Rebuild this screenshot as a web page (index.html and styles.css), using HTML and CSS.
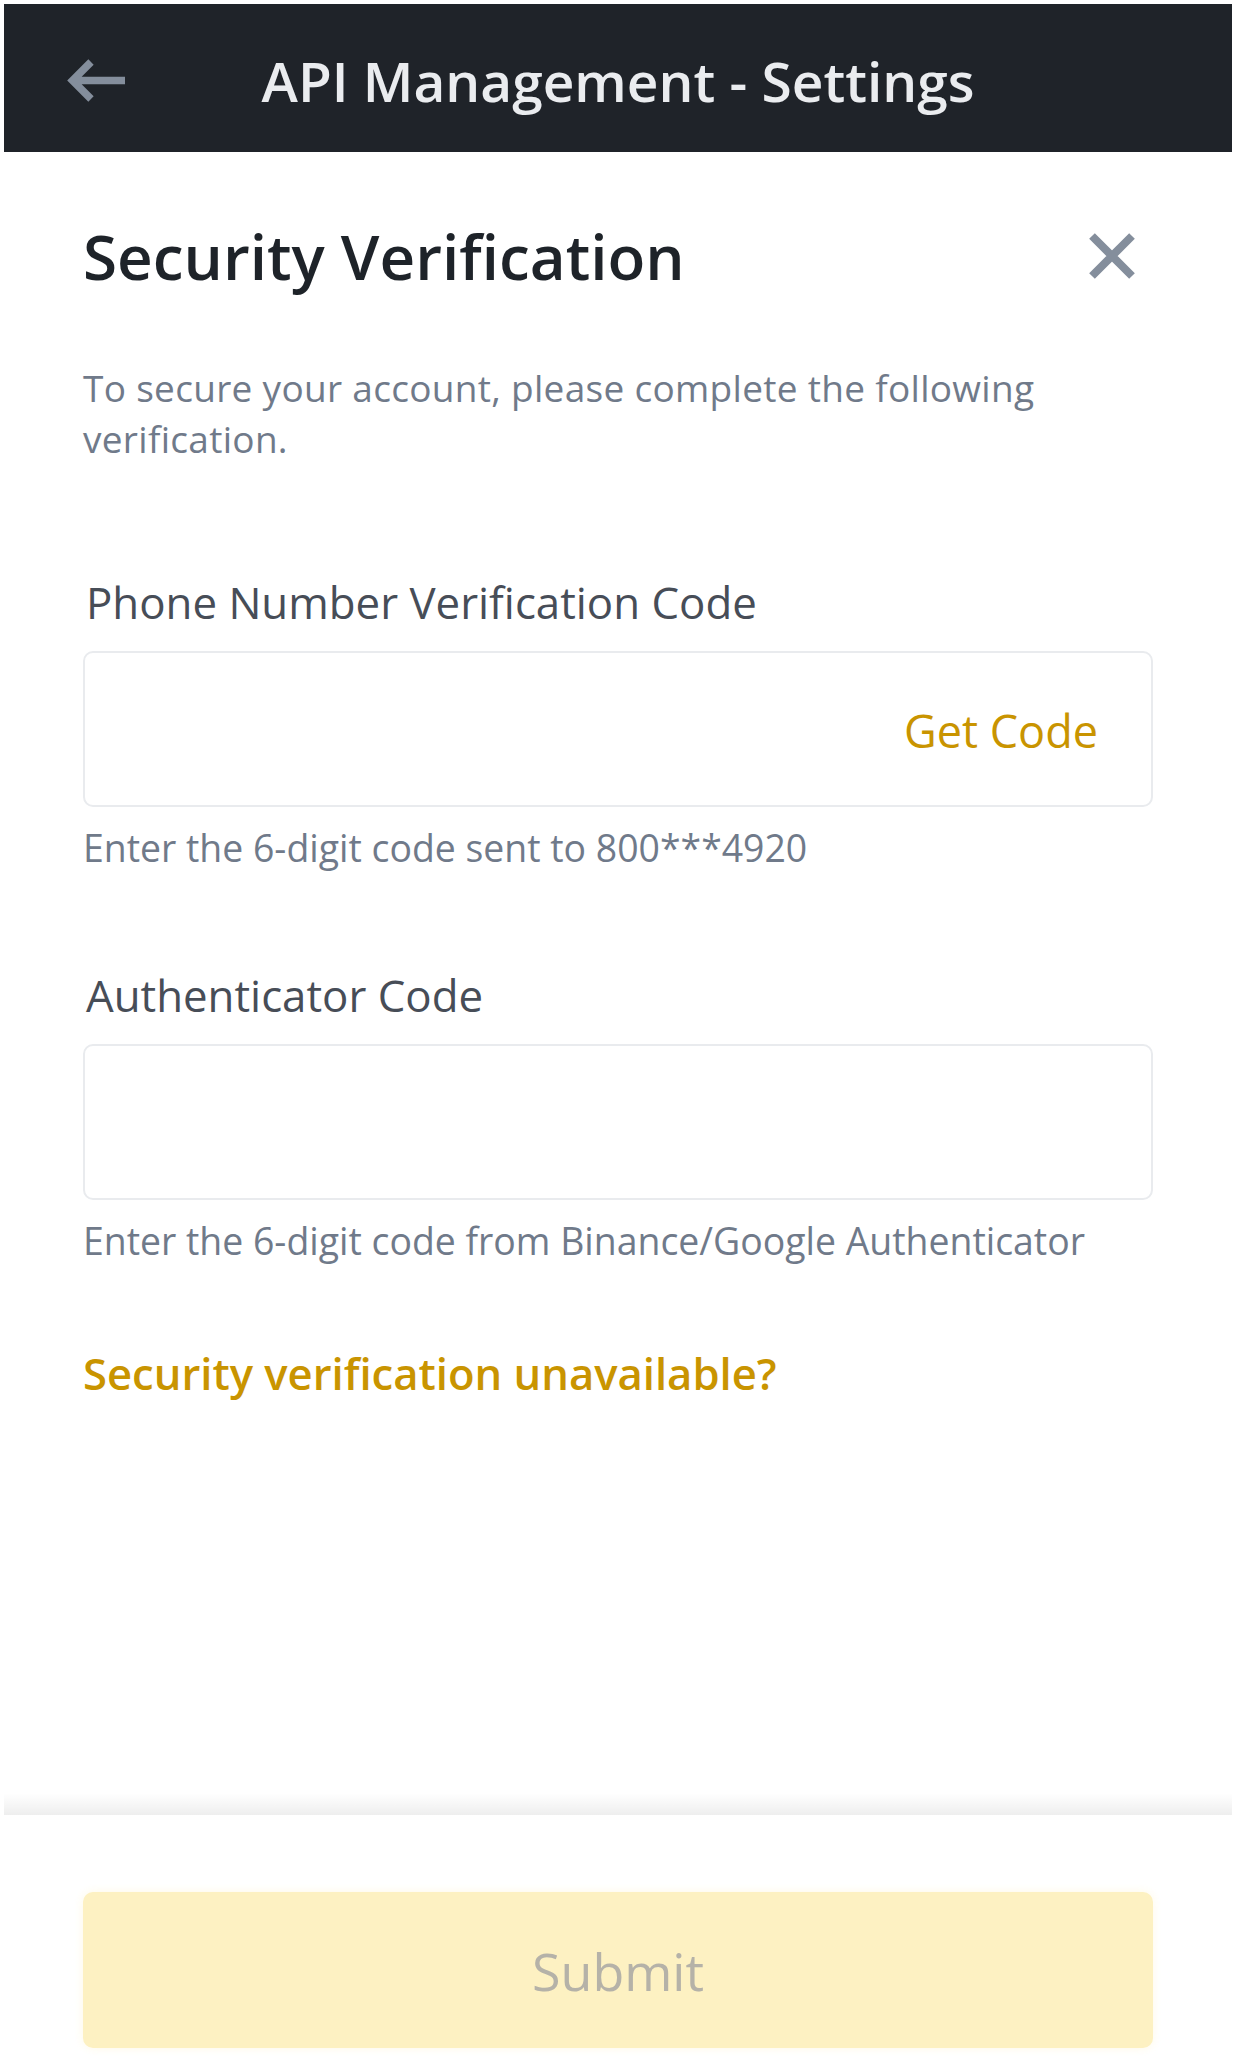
FILE: index.html
```html
<!DOCTYPE html>
<html lang="en">
<head>
<meta charset="utf-8">
<title>API Management - Settings</title>
<link rel="stylesheet" href="styles.css">
</head>
<body>
<div class="screen">
  <header class="topbar">
    <button class="back" aria-label="Back">
      <svg width="60" height="48" viewBox="0 0 60 48" aria-hidden="true">
        <path d="M59 24.5H8 M25 6 L6.5 24.5 L25 43" fill="none" stroke="#848E9C" stroke-width="7.5" stroke-linejoin="miter"/>
      </svg>
    </button>
    <h1 class="topbar-title">API Management - Settings</h1>
  </header>

  <main class="sheet">
    <div class="sheet-head">
      <h2 class="sheet-title">Security Verification</h2>
      <button class="close" aria-label="Close">
        <svg width="48" height="48" viewBox="0 0 48 48" aria-hidden="true">
          <path d="M4 4 L44 44 M44 4 L4 44" fill="none" stroke="#848E9C" stroke-width="8"/>
        </svg>
      </button>
    </div>
    <p class="intro">To secure your account, please complete the following verification.</p>

    <div class="field field-phone">
      <label class="field-label">Phone Number Verification Code</label>
      <div class="field-box">
        <span class="get-code">Get Code</span>
      </div>
      <p class="field-hint">Enter the 6-digit code sent to 800***4920</p>
    </div>

    <div class="field field-auth">
      <label class="field-label">Authenticator Code</label>
      <div class="field-box"></div>
      <p class="field-hint">Enter the 6-digit code from Binance/Google Authenticator</p>
    </div>

    <a class="help-link">Security verification unavailable?</a>
  </main>

  <footer class="actions">
    <button class="submit">Submit</button>
  </footer>
</div>
</body>
</html>
```

FILE: styles.css
```css
* { box-sizing: border-box; }

html, body {
  margin: 0;
  padding: 0;
  background: #ffffff;
}

body {
  font-family: "Open Sans", "Liberation Sans", Arial, sans-serif;
  color: #1E2329;
}

.screen {
  width: 1236px;
  height: 2072px;
  padding: 4px 4px 0;
  display: flex;
  flex-direction: column;
}

/* ---------- top bar ---------- */
.topbar {
  height: 148px;
  flex: none;
  background: #1F2329;
  display: flex;
  align-items: center;
  justify-content: center;
  position: relative;
  padding-top: 4px;
}

.back {
  position: absolute;
  left: 62px;
  top: 52px;
  width: 60px;
  height: 48px;
  padding: 0;
  border: 0;
  background: transparent;
  display: flex;
}

.topbar-title {
  margin: 0;
  font-size: 55px;
  font-weight: 600;
  color: #EAECEF;
  line-height: 1;
}

/* ---------- sheet ---------- */
.sheet {
  flex: 1;
  padding: 64px 79px 0;
  display: flex;
  flex-direction: column;
}

.sheet-head {
  height: 80px;
  display: flex;
  align-items: center;
  justify-content: space-between;
}

.sheet-title {
  margin: 0;
  font-size: 62px;
  line-height: 80px;
  font-weight: 600;
  color: #1E2329;
}

.close {
  width: 48px;
  height: 48px;
  margin-right: 17px;
  padding: 0;
  border: 0;
  background: transparent;
  display: flex;
}

.intro {
  margin: 66px 0 0;
  font-size: 37px;
  line-height: 51px;
  letter-spacing: 0.3px;
  color: #707A8A;
  max-width: 1000px;
}

.field {
  display: flex;
  flex-direction: column;
}

.field-phone { margin-top: 112px; }
.field-auth { margin-top: 97px; }

.field-label {
  padding-left: 3px;
  font-size: 43.8px;
  line-height: 52px;
  color: #474D57;
}

.field-box {
  margin-top: 23px;
  height: 156px;
  border: 2px solid #E9EBEE;
  border-radius: 10px;
  display: flex;
  align-items: center;
  justify-content: flex-end;
  padding-right: 53px;
}

.get-code {
  font-size: 45px;
  line-height: 1;
  color: #C99400;
  padding-top: 2px;
}

.field-hint {
  margin: 17px 0 0;
  font-size: 37.4px;
  line-height: 48px;
  color: #707A8A;
}

.help-link {
  margin-top: 82px;
  font-size: 43.6px;
  line-height: 52px;
  font-weight: 600;
  color: #C99400;
}

/* ---------- bottom actions ---------- */
.actions {
  flex: none;
  height: 279px;
  padding: 99px 79px 24px;
  background:
    linear-gradient(to bottom, rgba(0,0,0,0) 0, rgba(0,0,0,0.065) 100%) top / 100% 22px no-repeat,
    #ffffff;
}

.submit {
  width: 100%;
  height: 156px;
  border: 0;
  border-radius: 10px;
  background: #FDF1C2;
  box-shadow: 0 0 10px rgba(252, 213, 53, 0.12);
  font-family: "Open Sans", "Liberation Sans", Arial, sans-serif;
  font-size: 52px;
  font-weight: 500;
  color: #B5B2A8;
  padding: 0;
}
```
